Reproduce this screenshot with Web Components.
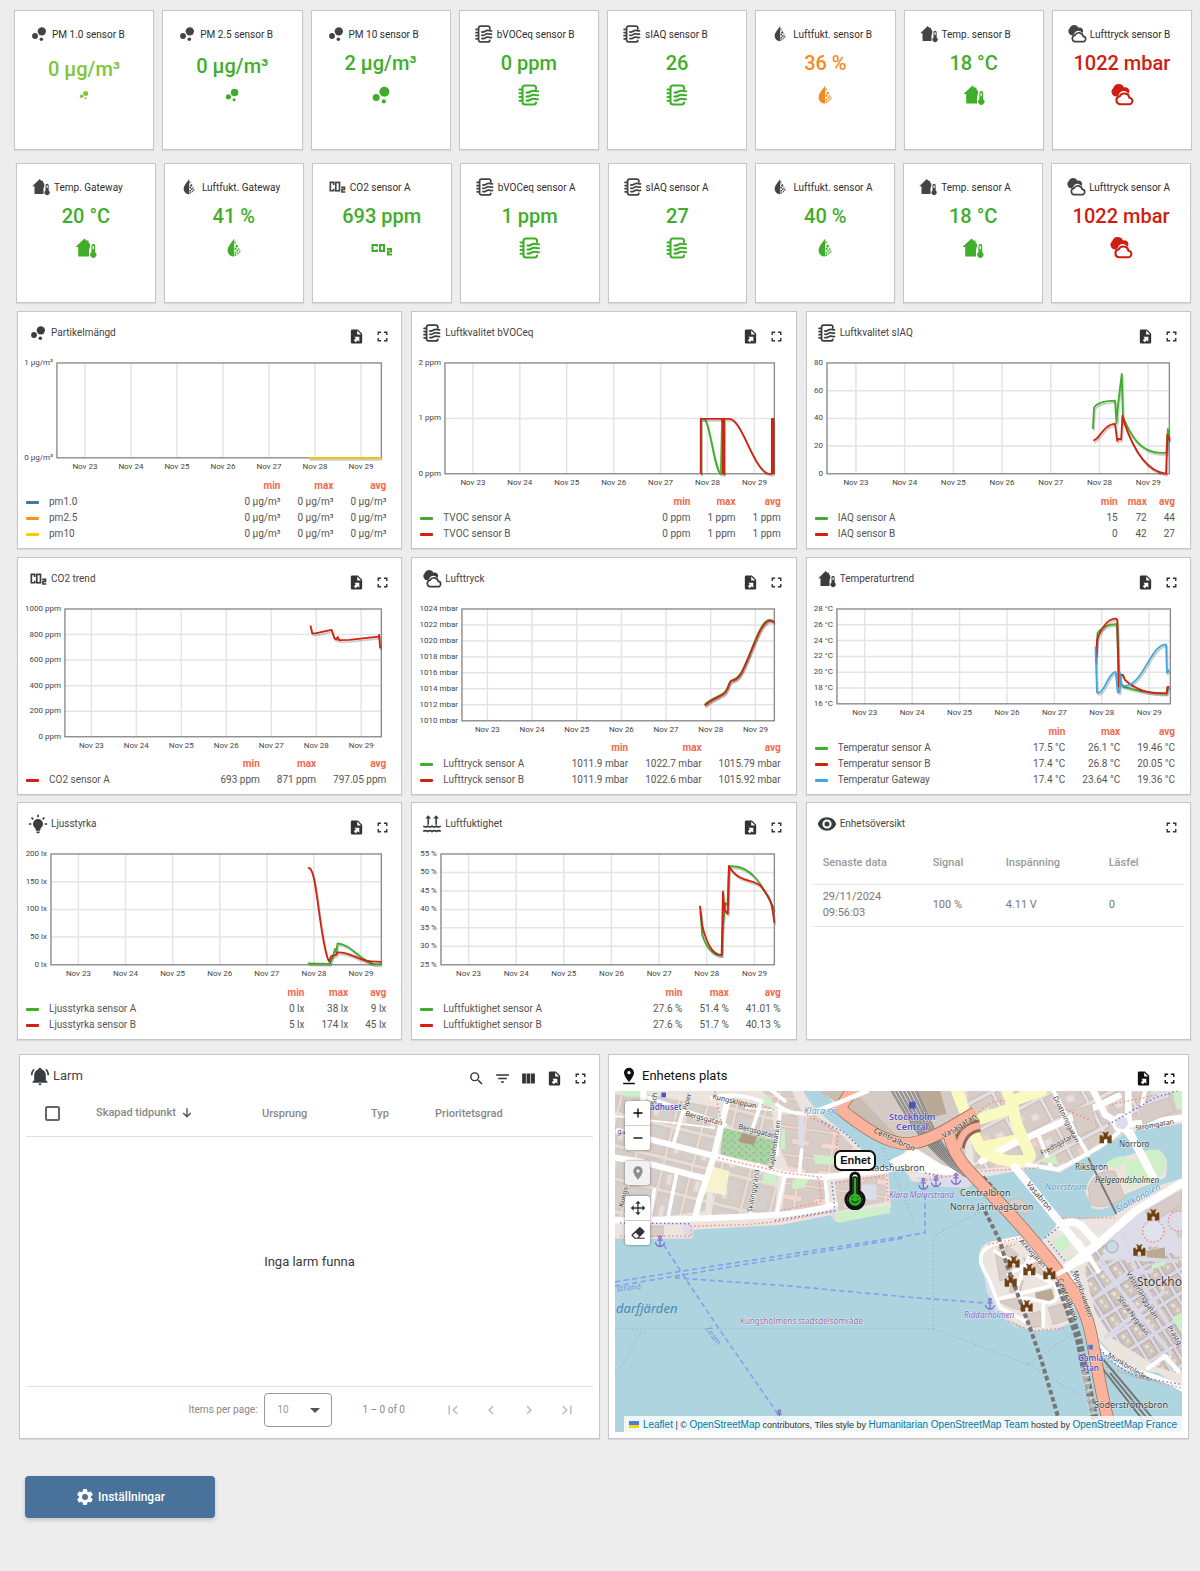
<!DOCTYPE html>
<html lang="sv">
<head>
<meta charset="utf-8">
<meta name="viewport" content="width=device-width, initial-scale=1">
<title>Sensorpanel</title>
<style>
  body { margin: 0; background: #ededed; color: #444; font-family: Roboto, "Liberation Sans", sans-serif; }
</style>
</head>
<body>
<sensor-dashboard></sensor-dashboard>
<script>
const ICONS = {
  bubbles: '<circle cx="7.2" cy="14.4" r="3.5"/><circle cx="14.8" cy="18.4" r="2.1"/><circle cx="15.4" cy="8.8" r="5"/>',
  air: '<g fill="none" stroke="currentColor" stroke-width="2.1" stroke-linecap="round" stroke-linejoin="round"><path d="M19 6V5q0-2.500-2.500-2.500H8Q5.500 2.500 5.500 5v14q0 2.500 2.500 2.500h8.500q2.500 0 2.500-2"/><path d="M2.500 6.500h2M2.500 10.200h2M2.500 14h2M2.500 17.700h2M9.500 9.500c3 1 4-2 7-1.800 2 .1 3 .8 4.500.5M9.500 13.500c3 1 4-2 7-1.800 2 .1 3 .8 4.500.5M9.500 17.500c3 1 4-2 7-1.800 2 .1 3 .8 4.500.5"/></g>',
  drop: '<g transform="translate(1.200 1.200) scale(.88)"><path d="M12.500 1.500C9 7 5 10.500 5 15a7 7 0 0 0 7.500 7z"/><path d="M13 3.500l1.600 2.500-1.600 2zM15.200 8l2 2.500-2 1.500-1.500-1.800zM13 12h2v2.200h-2zM17.500 11.500l1.500 2.700h-2.200zM15 14.300h2v2h-2zM18.500 15h1.300l-.5 2.400h-1.400zM13 16.500h2v2h-2zM16.300 17.500h2l-1.700 2.300h-1zM13 19.500h2.200l-1 2H13z"/></g>',
  home: '<path d="M10.500 2.500L1.500 11h2.700v9.500H15v-6.700l1-3.300V8l-1.500-1.500V4.500H13v.6z"/><path d="M19.300 8a1.900 1.900 0 0 0-1.900 1.900v6.300a3.100 3.100 0 1 0 3.800 0V9.900A1.900 1.900 0 0 0 19.300 8zm-.7 2h1.400v3.200h-1.400z"/>',
  clouds: '<g transform="translate(-1.200 -1) scale(1.080)"><path d="M7 13.500a4.500 4.500 0 0 1-2.800-8A5.300 5.300 0 0 1 14 5a3.900 3.900 0 0 1 5 4.600l-.6 1.200-1.600-1.400C13.500 7 9.600 9 9.200 12.200z"/><path d="M10.200 20.600h8.400a3 3 0 0 0 .5-6 4.800 4.800 0 0 0-9-1.300 3.700 3.700 0 0 0 .1 7.300z" fill="none" stroke="currentColor" stroke-width="1.900"/></g>',
  co2: '<g fill="none" stroke="currentColor" stroke-width="2"><polyline points="8,9.500 8,6.500 4,6.500 4,16.500 8,16.500 8,14"/><rect x="10.500" y="6.500" width="4.500" height="10"/><polyline points="17,12.500 21,12.500 21,15 18,15 18,18 22,18"/></g>',
  co2wide: '<g fill="none" stroke="currentColor" stroke-width="2"><polyline points="7,10.500 7,9 2.500,9 2.500,15 7,15 7,13.500"/><rect x="10" y="9" width="4" height="6"/><polyline points="17,13 21,13 21,15.500 18,15.500 18,18.500 22,18.500"/></g>',
  bulb: '<path d="M12 6a6 6 0 0 1 6 6c0 2.220-1.210 4.160-3 5.200V19a1 1 0 0 1-1 1h-4a1 1 0 0 1-1-1v-1.800c-1.790-1.040-3-2.980-3-5.200a6 6 0 0 1 6-6M14 21v1a1 1 0 0 1-1 1h-2a1 1 0 0 1-1-1v-1h4M20 11h3v2h-3v-2M1 11h3v2H1v-2M13 1v3h-2V1h2M4.920 3.500l2.130 2.140-1.420 1.410L3.500 4.930 4.920 3.500M16.950 5.630l2.120-2.130 1.430 1.430-2.130 2.120-1.420-1.420z"/>',
  humidity: '<path d="M7.500 1.500L11 5.500H8.500V13h-2V5.500H4zM17 1.500l3.500 4H18V13h-2V5.500h-2.500z"/><path d="M1.500 14.500c2 1.500 3.500 1.500 5.200 0 2 1.500 3.500 1.500 5.300 0 2 1.500 3.500 1.500 5.200 0 2 1.500 3.500 1.500 5.300 0M1.500 21c2-1.500 3.500-1.500 5.200 0 2-1.500 3.500-1.500 5.300 0 2-1.500 3.500-1.500 5.200 0 2-1.500 3.500-1.500 5.300 0" fill="none" stroke="currentColor" stroke-width="2"/>',
  eye: '<path d="M12 4C6.500 4 2.500 7.300 1 12c1.500 4.700 5.500 8 11 8s9.500-3.300 11-8c-1.500-4.700-5.500-8-11-8zm0 13.500a5.500 5.500 0 1 1 0-11 5.500 5.500 0 0 1 0 11zm0-8.500a3 3 0 1 0 0 6 3 3 0 0 0 0-6z"/>',
  bell: '<path d="M21 19v1H3v-1l2-2v-6c0-3.100 2.030-5.830 5-6.710V4a2 2 0 0 1 4 0v.29c2.970.88 5 3.610 5 6.710v6l2 2M14 21a2 2 0 0 1-4 0M19.750 3.190l-1.420 1.420A8.980 8.980 0 0 1 21 11h2c0-2.930-1.160-5.750-3.250-7.810M1 11h2c0-2.400.96-4.700 2.670-6.390L4.250 3.190A10.960 10.960 0 0 0 1 11z"/>',
  file: '<path fill-rule="evenodd" d="M14 2H6a2 2 0 0 0-2 2v16a2 2 0 0 0 2 2h12a2 2 0 0 0 2-2V8l-6-6M13 3.500L18.500 9H13V3.500M8.930 12.220H16v7.070l-2.120-2.120L11.050 20l-2.830-2.830 2.830-2.820-2.120-2.130z"/>',
  full: '<path d="M7 14H5v5h5v-2H7v-3zm-2-4h2V7h3V5H5v5zm12 7h-3v2h5v-5h-2v3zM14 5v2h3v3h2V5h-5z"/>',
  search: '<path d="M15.500 14h-.79l-.28-.27A6.470 6.470 0 0 0 16 9.500 6.500 6.500 0 1 0 9.500 16c1.610 0 3.090-.59 4.230-1.570l.27.28v.79l5 4.990L20.490 19l-4.990-5zm-6 0a4.500 4.500 0 1 1 0-9 4.500 4.500 0 0 1 0 9z"/>',
  filter: '<path d="M10 18h4v-2h-4v2zM3 6v2h18V6H3zm3 7h12v-2H6v2z"/>',
  columns: '<path d="M3 5h5.300v14H3zM9.300 5h5.300v14H9.300zM15.600 5H21v14h-5.400z"/>',
  down: '<path d="M10.800 4h2.400v11.600l4.600-4.600 1.600 1.700L12 20l-7.400-7.300L6.200 11l4.600 4.600z"/>',
  place: '<path d="M18 8A6 6 0 0 0 6 8c0 4.500 6 11 6 11s6-6.500 6-11zm-8 0a2 2 0 1 1 4 0 2 2 0 0 1-4 0zM5 20v2h14v-2H5z"/>',
  pin: '<path d="M12 2a7 7 0 0 0-7 7c0 5.250 7 13 7 13s7-7.750 7-13a7 7 0 0 0-7-7zm0 9.500a2.500 2.500 0 1 1 0-5 2.500 2.500 0 0 1 0 5z"/>',
  move: '<path d="M12 1l4 4.500h-3V11h5.500V8l4.500 4-4.500 4v-3H13v5.500h3L12 23l-4-4.500h3V13H5.500v3L1 12l4.500-4v3H11V5.500H8z"/>',
  eraser: '<path fill-rule="evenodd" d="M16.200 3.600l5 5a2 2 0 0 1 0 2.800L13.500 19H22v1.800H7L2.800 16.600a2 2 0 0 1 0-2.900L13.400 3.600a2 2 0 0 1 2.800 0zM4.200 15.200L8 19h3l2.500-2.500-5-5z"/>',
  plus: '<path d="M10.700 3h2.600v7.700H21v2.600h-7.700V21h-2.600v-7.700H3v-2.600h7.700z"/>',
  minus: '<path d="M3 10.700h18v2.600H3z"/>',
  first: '<path d="M18.410 16.590L13.820 12l4.590-4.590L17 6l-6 6 6 6zM6 6h2v12H6z"/>',
  prev: '<path d="M15.410 7.410L14 6l-6 6 6 6 1.410-1.410L10.830 12z"/>',
  next: '<path d="M10 6L8.590 7.410 13.170 12l-4.580 4.590L10 18l6-6z"/>',
  last: '<path d="M5.590 7.410L10.180 12l-4.590 4.590L7 18l6-6-6-6zM16 6h2v12h-2z"/>',
  gear: '<path d="M19.140 12.940c.04-.3.060-.61.060-.94s-.02-.64-.07-.94l2.030-1.580a.49.49 0 0 0 .12-.61l-1.920-3.320a.49.49 0 0 0-.59-.22l-2.390.96a7 7 0 0 0-1.620-.94l-.36-2.540a.48.48 0 0 0-.48-.41h-3.840a.48.48 0 0 0-.47.41l-.36 2.540c-.59.24-1.130.57-1.620.94l-2.390-.96a.48.48 0 0 0-.59.22L2.740 8.870a.48.48 0 0 0 .12.61l2.030 1.580a6 6 0 0 0-.02 1.880l-2.030 1.580a.49.49 0 0 0-.12.61l1.920 3.320c.12.22.37.29.59.22l2.390-.96c.5.38 1.030.7 1.620.94l.36 2.540c.05.24.24.41.48.41h3.840c.24 0 .44-.17.47-.41l.36-2.540c.59-.24 1.130-.56 1.620-.94l2.390.96c.22.08.47 0 .59-.22l1.920-3.320a.48.48 0 0 0-.12-.61zM12 15.600a3.600 3.600 0 1 1 0-7.200 3.600 3.600 0 0 1 0 7.200z"/>'
};

/* Inline icon on a 24-unit grid; --size sets its edge. */
class AppIcon extends HTMLElement {
  connectedCallback() {
    this.attachShadow({ mode: 'open' }).innerHTML =
      `<style>:host{display:inline-flex;flex:none;width:var(--size,20px);height:var(--size,20px)}svg{width:100%;height:100%;fill:currentColor}</style>
       <svg viewBox="0 0 24 24" aria-hidden="true">${ICONS[this.getAttribute('name')]}</svg>`;
  }
}
customElements.define('app-icon', AppIcon);

const CARD = `
  *{box-sizing:border-box}
  :host{display:flex;flex-direction:column;box-sizing:border-box;min-width:0;background:#fff;border:1px solid #c6c6c6;box-shadow:0 1px 1px rgba(0,0,0,.08)}
  header{display:flex;justify-content:space-between;align-items:flex-start;height:39px;padding:0 6px 0 10px}
  h2{display:flex;align-items:center;gap:3px;height:20px;margin:11px 0 0;font-size:10px;line-height:20px;font-weight:400;color:#444;white-space:nowrap}
  h2 app-icon{color:#3a3d3f}
  .actions{display:flex;margin-top:11px}
  .actions button{display:flex;align-items:center;justify-content:center;width:26px;height:26px;padding:0;border:0;background:none;color:#333;--size:17px}
`;
const action = (icon, label) => `<button type="button" aria-label="${label}"><app-icon name="${icon}"></app-icon></button>`;

class StatCard extends HTMLElement {
  connectedCallback() {
    const a = n => this.getAttribute(n);
    this.attachShadow({ mode: 'open' }).innerHTML = `<style>
      :host{display:block;box-sizing:border-box;flex:1 1 0;min-width:0;min-height:140px;padding-top:11px;background:#fff;border:1px solid #c6c6c6;box-shadow:0 1px 1px rgba(0,0,0,.08)}
      h2{display:flex;align-items:center;gap:3px;height:24px;margin:0;padding-left:14px;font-size:10px;font-weight:400;color:#2e2e2e;white-space:nowrap}
      div{display:flex;flex-direction:column;align-items:center;justify-content:center;gap:6px;height:64px;color:${a('tone')};--size:${a('size') || 24}px}
      strong{font-size:20px;line-height:28px;font-weight:500;white-space:nowrap}
      h2 app-icon{color:#444;--size:20px}
    </style>
    <h2><app-icon name="${a('icon')}"></app-icon><slot></slot></h2>
    <div><strong>${a('value')}</strong><app-icon name="${a('icon') === 'co2' ? 'co2wide' : a('icon')}"></app-icon></div>`;
  }
}
customElements.define('stat-card', StatCard);

const G = '#3fae2a', R = '#d3200f', B = '#42a5dc';
/* box: left, right, top, bottom of the plot on the drawing canvas; x: first tick and pitch. */
const TRENDS = {
  pm: { view: [18, 351, 384, 124], box: [57, 382, 363, 458], x: [85, 46.1], y: ['1 µg/m³', '0 µg/m³'],
    lines: [['#f2c200', 'M309 458H382']],
    legend: [['#3f76ad', 'pm1.0', '0 µg/m³', '0 µg/m³', '0 µg/m³'], ['#f7931e', 'pm2.5', '0 µg/m³', '0 µg/m³', '0 µg/m³'], ['#f7cd00', 'pm10', '0 µg/m³', '0 µg/m³', '0 µg/m³']] },
  voc: { view: [413, 351, 384, 138], box: [446, 776, 363, 474], x: [474, 47], y: ['2 ppm', '1 ppm', '0 ppm'],
    lines: [[G, 'M702.300 474V419H705.500C711 419 716 472 722.500 474L723.500 419H725.500V474'], [R, 'M702.300 474V419H724.500V474H725.500V419H731C744 419 756 474 771.500 474H773.500V419H775V474']],
    legend: [[G, 'TVOC sensor A', '0 ppm', '1 ppm', '1 ppm'], [R, 'TVOC sensor B', '0 ppm', '1 ppm', '1 ppm']] },
  iaq: { view: [807, 351, 384, 138], box: [827, 1170, 363, 474], x: [856, 48.8], y: ['80', '60', '40', '20', '0'],
    lines: [[G, 'M1093.400 429L1094.500 408C1097 403 1105 401 1115.500 400.700L1117 423L1118.500 405L1122.300 374L1123.500 417C1132 438 1142 452 1160 453H1167L1168.500 429L1170 440'],
            [R, 'M1094 441L1097 439C1103 432 1108 424 1115.600 424L1117.700 441L1119 439L1121.700 439.500L1123 415.700L1124.500 422C1134 450 1148 472 1166.700 474L1168 435L1170 440']],
    legend: [[G, 'IAQ sensor A', '15', '72', '44'], [R, 'IAQ sensor B', '0', '42', '27']] },
  co2: { view: [18, 597, 384, 155], box: [65, 382, 609, 737], x: [91.5, 45.05], y: ['1000 ppm', '800 ppm', '600 ppm', '400 ppm', '200 ppm', '0 ppm'],
    lines: [[R, 'M311 625.500L312.700 633.500H316L325 631.500L332.200 630L335 638.500L337 639.500L338.300 637L339.500 640.300L350 640L377 637H379.200L379.700 635L380.800 648.500']],
    legend: [[R, 'CO2 sensor A', '693 ppm', '871 ppm', '797.05 ppm']] },
  pressure: { view: [413, 597, 384, 138], box: [463, 776, 609, 721], x: [488.5, 44.75], y: ['1024 mbar', '1022 mbar', '1020 mbar', '1018 mbar', '1016 mbar', '1014 mbar', '1012 mbar', '1010 mbar'],
    lines: [[G, 'M706 705C712 699 720 697 725 693.500C730 690 730 682 733 680.500C737 680 739 678 742 674C752 658 761 620 771 620L775 621'], [R, 'M706.400 705.700C712 700 720 698 725 694.500C730 691 730 683 733 681C737 680.500 739 679 742 675C752 659 761 621 772 620.700C774 620.700 775 621 775.500 622.500']],
    legend: [[G, 'Lufttryck sensor A', '1011.9 mbar', '1022.7 mbar', '1015.79 mbar'], [R, 'Lufttryck sensor B', '1011.9 mbar', '1022.6 mbar', '1015.92 mbar']] },
  temp: { view: [807, 597, 384, 122], box: [837, 1171, 609, 704], x: [864.8, 47.5], y: ['28 °C', '26 °C', '24 °C', '22 °C', '20 °C', '18 °C', '16 °C'],
    lines: [[G, 'M1096.700 656L1098 633C1102 627 1110 624 1117.400 624.300L1119.500 682L1124.500 686.700C1138 692 1152 693 1167 693.300L1169 687'],
            [R, 'M1096.400 663L1097.500 640C1101 630 1108 618 1116.600 618.700L1117.800 620L1119.300 686.700L1121 675L1123.500 675L1125.500 680C1137 690 1148 694 1167.200 693.700L1168 687.300L1170 686.700'],
            [B, 'M1096 646.700L1097.500 692.700H1100C1106 690 1109 673 1116.300 672L1118.200 692.300H1120L1120.900 673.300L1121.600 685L1125 686C1143 686 1150 648 1165 644.700H1166.800L1167.500 672.700L1170 670']],
    legend: [[G, 'Temperatur sensor A', '17.5 °C', '26.1 °C', '19.46 °C'], [R, 'Temperatur sensor B', '17.4 °C', '26.8 °C', '20.05 °C'], [B, 'Temperatur Gateway', '17.4 °C', '23.64 °C', '19.36 °C']] },
  light: { view: [18, 842, 384, 138], box: [51, 382, 854, 965], x: [78.5, 47.2], y: ['200 lx', '150 lx', '100 lx', '50 lx', '0 lx'],
    lines: [[G, 'M308.500 963.700L330.300 964L333 958L335.600 949L336.800 953L338 943.700C352 944 360 961 375 964.500H382'],
            [R, 'M308.500 868.300C317 863 319 930 328 958L329.500 961.300L331.800 956.300L336.800 955L338 952.500C352 952 358 961 372 961.500L382 962']],
    legend: [[G, 'Ljusstyrka sensor A', '0 lx', '38 lx', '9 lx'], [R, 'Ljusstyrka sensor B', '5 lx', '174 lx', '45 lx']] },
  humid: { view: [413, 842, 384, 138], box: [442, 776, 854, 965], x: [469.6, 47.75], y: ['55 %', '50 %', '45 %', '40 %', '35 %', '30 %', '25 %'],
    lines: [[G, 'M702 912L703.700 935C707 946 714 956 723.200 955.500L724.500 925L726.700 903.300L729 905L730.500 866.500C752 864 764 884 776 910'],
            [R, 'M701.400 906L703.500 925C708 944 714 955 723.200 955.300L724.500 891.500L726 910L729.400 914L730.500 866C741 885 758 878 764 888C768 894 772 897 774.200 910L776 922.700']],
    legend: [[G, 'Luftfuktighet sensor A', '27.6 %', '51.4 %', '41.01 %'], [R, 'Luftfuktighet sensor B', '27.6 %', '51.7 %', '40.13 %']] }
};

class TrendCard extends HTMLElement {
  connectedCallback() {
    const t = TRENDS[this.getAttribute('data')], [l, r, top, bot] = t.box, n = t.y.length - 1;
    let grid = '', labels = '';
    for (let i = 0; i < 7; i++) {
      const x = t.x[0] + i * t.x[1];
      grid += `M${x} ${top}V${bot}`;
      labels += `<text x="${x}" y="${bot + 11}" text-anchor="middle">Nov ${23 + i}</text>`;
    }
    t.y.forEach((s, i) => {
      const y = top + (bot - top) * i / n;
      if (i && i < n) grid += `M${l} ${y}H${r}`;
      labels += `<text x="${l - 4}" y="${y + 2}" text-anchor="end">${s}</text>`;
    });
    const lines = t.lines.map(([c, d]) => `<path d="${d}" class="shade"/><path d="${d}" stroke="${c}"/>`).join('');
    this.attachShadow({ mode: 'open' }).innerHTML = `<style>${CARD}
      :host{min-height:238px}
      .plot{display:block;width:100%;font-size:8px;fill:#444}
      .plot path{fill:none;stroke-width:1.800;stroke-linejoin:round}
      .plot .grid{stroke:#e4e4e4;stroke-width:1.500}
      .plot .shade{stroke:#000;opacity:.2;transform:translate(1px,2px)}
      .plot rect{fill:none;stroke:#8c8c8c;stroke-width:1.400}
      table{width:auto;margin:auto 15px 6px 8px;border-collapse:collapse;font-size:10px;line-height:16px;color:#555;white-space:nowrap}
      th,td{padding:0 0 0 17px;text-align:right;font-weight:400}
      thead th{padding-left:10px;color:#f4694b;font-weight:700}
      tbody th{width:100%;padding:0;text-align:left}
      thead td{padding:0}
      i{display:inline-block;width:13px;height:3px;margin-right:10px;vertical-align:middle;border-radius:1px}
    </style>
    <header><h2><app-icon name="${this.getAttribute('icon')}"></app-icon><slot></slot></h2>
      <div class="actions">${action('file', 'Exportera')}${action('full', 'Helskärm')}</div></header>
    <svg class="plot" viewBox="${t.view.join(' ')}"><path class="grid" d="${grid}"/><rect x="${l}" y="${top}" width="${r - l}" height="${bot - top}"/>${lines}${labels}</svg>
    <table><thead><tr><td></td><th scope="col">min</th><th scope="col">max</th><th scope="col">avg</th></tr></thead>
    <tbody>${t.legend.map(([c, name, ...v]) => `<tr><th scope="row"><i style="background:${c}"></i>${name}</th>${v.map(x => `<td>${x}</td>`).join('')}</tr>`).join('')}</tbody></table>`;
  }
}
customElements.define('trend-card', TrendCard);

class DeviceCard extends HTMLElement {
  connectedCallback() {
    this.attachShadow({ mode: 'open' }).innerHTML = `<style>${CARD}
      table{margin:0 6px;border-collapse:collapse;table-layout:fixed;font-size:11px;line-height:16px;color:#777}
      th,td{padding:0 0 0 10px;border-bottom:1px solid #e4e4e4;text-align:left}
      th{height:42px;font-weight:500;color:#999}
      td{height:42px}
    </style>
    <header><h2><app-icon name="eye"></app-icon><slot></slot></h2><div class="actions">${action('full', 'Helskärm')}</div></header>
    <table><colgroup><col style="width:110px"><col style="width:73px"><col style="width:103px"><col></colgroup>
      <thead><tr><th>Senaste data</th><th>Signal</th><th>Inspänning</th><th>Läsfel</th></tr></thead>
      <tbody><tr><td>29/11/2024<br>09:56:03</td><td>100 %</td><td>4.11 V</td><td>0</td></tr></tbody></table>`;
  }
}
customElements.define('device-card', DeviceCard);

class AlarmCard extends HTMLElement {
  connectedCallback() {
    this.attachShadow({ mode: 'open' }).innerHTML = `<style>${CARD}
      header{height:36px}
      h2{font-size:13px}
      .actions{margin-top:10px}
      table{margin:0 6px;border-collapse:collapse;table-layout:fixed;font-size:11px;color:#888}
      th{height:45px;padding:0;border-bottom:1px solid #e0e0e0;text-align:left;font-weight:500}
      th app-icon{--size:14px;margin-left:4px;vertical-align:middle;color:#555}
      input{appearance:none;display:block;width:15px;height:15px;margin:0 0 0 19px;border:2px solid #666;border-radius:2px;background:#fff}
      p{flex:1;display:flex;align-items:center;justify-content:center;margin:0 6px;font-size:13px;color:#3a3a3a}
      footer{display:flex;align-items:center;justify-content:flex-end;height:52px;margin:0 6px;padding:0 7px 6px 0;border-top:1px solid #e0e0e0;font-size:10px;color:#888}
      .pick{position:relative;margin:0 30px 0 7px}
      select{appearance:none;display:block;width:68px;height:34px;padding:0 12px;border:1px solid #999;border-radius:4px;background:#fff;color:#999;font:10px/32px Roboto,sans-serif}
      .pick::after{content:"";position:absolute;right:12px;top:15px;border:5px solid transparent;border-top-color:#555;border-bottom:0;pointer-events:none}
      .range{margin-right:29px}
      footer button{display:flex;align-items:center;justify-content:center;width:38px;height:38px;padding:0;border:0;background:none;color:#bdbdbd;--size:18px}
    </style>
    <header><h2><app-icon name="bell"></app-icon><slot></slot></h2>
      <div class="actions">${action('search', 'Sök')}${action('filter', 'Filter')}${action('columns', 'Kolumner')}${action('file', 'Exportera')}${action('full', 'Helskärm')}</div></header>
    <table><colgroup><col style="width:70px"><col style="width:166px"><col style="width:109px"><col style="width:64px"><col></colgroup>
      <thead><tr><th><input type="checkbox" aria-label="Markera alla"></th><th>Skapad tidpunkt<app-icon name="down"></app-icon></th><th>Ursprung</th><th>Typ</th><th>Prioritetsgrad</th></tr></thead></table>
    <p>Inga larm funna</p>
    <footer><label for="size">Items per page:</label><span class="pick"><select id="size"><option>10</option></select></span><span class="range">1 – 0 of 0</span>
      ${action('first', 'Första')}${action('prev', 'Föregående')}${action('next', 'Nästa')}${action('last', 'Sista')}</footer>`;
  }
}
customElements.define('alarm-card', AlarmCard);

/* Street labels: text, x, y, size, rotation, class */
const PLACES = [
  ['ådhuset', 650, 1110, 8, 0, 'st'], ['Kungsklippan', 712, 1099, 7, 13], ['Bergsgatan', 685, 1116, 7, 15], ['Bergsgatan', 738, 1129, 7, 15],
  ['Kaplansbacken', 773, 1170, 7, -81], ['Skillinggränd', 752, 1213, 7, -80], ['Kungs', 623, 1208, 7, -75], ['Sch', 656, 1105, 7, -85], ['Piper', 687, 1111, 7, -75], ['gatan', 617, 1134, 7, 10],
  ['Klara sjö', 804, 1114, 9, 0, 'wa'], ['Stockholm', 889, 1120, 9, 0, 'st'], ['Central', 896, 1130, 9, 0, 'st'],
  ['Centralbron', 873, 1133, 8, 25], ['Vasagatan', 944, 1139, 8, -32], ['Stadshusbron', 866, 1171, 9, 0], ['Klara Mälarstrand', 889, 1198, 8, 0, 'fe'],
  ['Centralbron', 960, 1196, 9, 0], ['Norra Järnvägsbron', 950, 1210, 9, 0], ['Vasabron', 1026, 1185, 8, 50], ['Norrström', 1045, 1190, 9, 0, 'wa'],
  ['Riksbron', 1075, 1170, 8, 0], ['Helgeandsholmen', 1095, 1183, 8, 0, 'it'], ['Norrbro', 1119, 1147, 8, 0], ['Strömgatan', 1136, 1131, 7, -10],
  ['Fredsgatan', 1042, 1156, 7, -29], ['Drottninggatan', 1053, 1098, 7, 64], ['Stallkanalen', 1118, 1213, 9, -29, 'wa'],
  ['Munkbroleden', 1073, 1272, 7, 72], ['Munkbroleden', 1107, 1357, 7, 31], ['Västerlånggatan', 1126, 1274, 7, 58], ['Stora Nygatan', 1117, 1299, 7, 52], ['Prästg', 1167, 1328, 7, 58],
  ['Stockho', 1137, 1286, 12, 0], ['Riddarholmen', 964, 1318, 8, 0, 'fe'], ['Arkivgatan', 1019, 1242, 7, 48], ['Centralbron', 1057, 1280, 8, 68],
  ['Gamla', 1078, 1361, 8, 0, 'st'], ['stan', 1082, 1371, 8, 0, 'st'], ['Söderströmsbron', 1094, 1408, 9, 0], ['Västra stam', 1081, 1372, 8, 78, 'gr'],
  ['Kungsholmens stadsdelsområde', 740, 1324, 8, 0, 'ad'], ['darfjärden', 616, 1313, 13, 0, 'big'], ['strand', 617, 1292, 8, -6, 'fl'], ['Zeam', 705, 1329, 8, 55, 'fl']
];
const CASTLES = [[1502, 280], [1645, 512], [1603, 618], [1226, 653], [1273, 676], [1333, 688], [1217, 711], [1265, 785]];
const ANCHORS = [[955, 418], [993, 410], [1053, 403], [1155, 778], [165, 590], [523, 1112]];

class CityMap extends HTMLElement {
  connectedCallback() {
    const rails = [0, 12, 24, 36, 48, 60, 72].map(d => `M${860 + d} 138C${900 + d} 210 ${960 + d / 2} 320 ${1080 + d / 3} 395`).join('');
    this.attachShadow({ mode: 'open' }).innerHTML = `<style>
      :host{display:block;position:relative;overflow:hidden;background:#aed5df}
      svg.tiles{position:absolute;inset:0;width:100%;height:100%}
      .land{fill:#ebe4df}.road{fill:none;stroke:#fff;stroke-linejoin:round;stroke-linecap:round}
      .foot{fill:none;stroke:#f58d7e;stroke-width:4;stroke-dasharray:5 7}.cycle{fill:none;stroke:#5a66e0;stroke-width:4;stroke-dasharray:4 8}
      .ferry{fill:none;stroke:#8ba0ea;stroke-width:5;stroke-dasharray:16 10}.border{fill:none;stroke:#9aa8bb;stroke-width:3;stroke-dasharray:4 8}
      .moto{fill:none;stroke:#8f6a5c}.moto+.moto{stroke:#fcb29a}.yel{fill:none;stroke:#f9fac0;stroke-width:34;stroke-linejoin:round;stroke-linecap:round}
      .park{fill:#cdf0c9}.bld{fill:#d8cdc6;stroke:#c5b5aa;stroke-width:2}.plaza{fill:#dddde9}.rail{fill:none;stroke:#777;stroke-width:6}
      text{font-family:"Noto Sans","Open Sans",sans-serif;fill:#3c3c3c;stroke:#fff;stroke-opacity:.6;stroke-width:1px;paint-order:stroke}
      .st{fill:#5151c8;font-weight:600}.wa{fill:#6099c8;font-style:italic}.fe{fill:#7f66c4;font-style:italic}.it{font-style:italic}
      .gr{fill:#999}.ad{fill:#9673a8}.big{fill:#4d86b5;font-style:italic;stroke:none}.fl{fill:#8291df;stroke:none}
    </style>
    <svg class="tiles" viewBox="615 1091 567 342" preserveAspectRatio="xMidYMid slice" role="img" aria-label="Karta över Stockholm">
      <defs>
        <pattern id="blocks" width="86" height="96" patternUnits="userSpaceOnUse" patternTransform="rotate(14)">
          <rect width="86" height="96" fill="#e6ddd7"/><rect x="5" y="6" width="75" height="82" fill="#d8cdc6" stroke="#c7b8ae" stroke-width="2"/><rect x="20" y="18" width="46" height="14" fill="#d0d2d2"/><rect x="20" y="44" width="14" height="30" fill="#e6e0dc"/><rect x="50" y="44" width="14" height="30" fill="#d0d2d2"/>
        </pattern>
        <pattern id="pink" width="90" height="84" patternUnits="userSpaceOnUse" patternTransform="rotate(8)">
          <rect width="90" height="84" fill="#f2d8d1"/><path d="M4 4h80v28H54v18h30v30H4V50h16V32H4z" fill="#d8cdc6" stroke="#c7b8ae" stroke-width="2"/>
        </pattern>
        <pattern id="city" width="120" height="84" patternUnits="userSpaceOnUse" patternTransform="rotate(-28)">
          <rect width="120" height="84" fill="#e4e0e4"/><rect x="5" y="5" width="108" height="70" fill="#d8cdc6" stroke="#b9a99e" stroke-width="2"/><rect x="24" y="20" width="22" height="18" fill="#f0d0c8"/><rect x="66" y="34" width="22" height="18" fill="#e8e0dc"/>
        </pattern>
        <pattern id="old" width="44" height="62" patternUnits="userSpaceOnUse" patternTransform="rotate(-32)">
          <rect width="44" height="62" fill="#d9d9e8"/><rect x="4" y="4" width="33" height="49" fill="#d0c3ba" stroke="#a99c94" stroke-width="2"/><rect x="14" y="13" width="9" height="10" fill="#eee6e0"/><rect x="18" y="31" width="9" height="10" fill="#e4dcd6"/>
        </pattern>
        <pattern id="trees" width="22" height="20" patternUnits="userSpaceOnUse"><rect width="22" height="20" fill="#acd2a6"/><circle cx="6" cy="6" r="4" fill="#8dbf89"/><circle cx="16" cy="14" r="4" fill="#93c68e"/></pattern>
        <g id="castle"><path d="M-18-8h7v4h5v-10h-3v-4h6v3h6v-3h6v4H6v10h5v-4h7v24H5V6q-5-6-10 0v10h-13z" fill="#6e4114"/></g>
        <g id="anchor" fill="none" stroke="#7c72cc" stroke-width="4"><circle cy="-12" r="4"/><path d="M0-8V15M-8-3H8M-14 4Q-10 16 0 16T14 4"/></g>
      </defs>
      <g transform="translate(605 1045) scale(.33333)">
        <rect x="0" y="100" width="1800" height="1100" fill="#aed5df"/>
        <path class="land" d="M0 100H580C600 170 640 205 700 250S770 310 800 375L850 385 858 490 700 535 675 512 530 541 265 556 262 582H0z"/>
        <path fill="url(#blocks)" d="M130 150L340 190 335 320 320 340 300 500 150 520 30 515V150z"/>
        <path fill="url(#blocks)" d="M330 350L520 390 510 500 320 515zM370 160L500 190 515 330 350 230z"/>
        <path fill="url(#pink)" d="M530 210L620 205 700 260 785 350 700 385 560 390 520 300zM545 400L660 405 660 480 530 505z"/>
        <path fill="url(#pink)" d="M470 138H560L590 200 530 200zM690 410L840 390 850 470 700 500z"/>
        <path fill="url(#trees)" d="M355 250L515 290 490 362 345 330z"/><path fill="#ae9a83" d="M410 265l45 12-8 25-45-10z"/>
        <path class="park" d="M625 330l55 5 50 30-100-8zM475 385h40v32h-42zM565 405l45-3-10 28-40 4zM695 505L853 483 856 505 702 535zM40 138h90v18H60zM290 405h15v45h-18zM530 255h10v60h-15zM475 158l25 0 5 28-30-4z"/>
        <path fill="#f7f3cf" d="M322 366l52 14-14 72-60-12z"/><path class="plaza" d="M580 215h18v90h-18zM770 420h45v45h-45zM236 540h26v42h-26zM672 500h20v35z"/>
        <path class="bld" d="M90 544h85v32H90z"/>
        <path class="road" stroke-width="18" d="M30 528L270 523 420 516Q600 510 690 480M30 340L110 352 300 402M40 260L330 335 540 390 660 398 850 375 940 350M115 300V138M370 160L325 340 285 460 270 520"/>
        <path class="road" stroke-width="11" d="M215 385L190 515M148 435L135 520M240 180L205 300M320 160Q380 140 470 170L440 260M460 360L435 510M540 390L515 505M525 195L515 330M590 315L583 385M515 180Q560 215 620 205L700 175 830 138M540 170L500 138M660 400L670 490M130 160L360 240"/>
        <path fill="none" stroke="#fff" stroke-width="5" d="M30 215L330 250M420 190L540 200"/>
        <path class="foot" d="M45 575H258V545L430 540 530 530 690 500M340 340L540 385 650 398M350 240L330 140M470 180L515 200M690 415L845 392 850 470M605 210L700 265 690 350"/>
        <path class="foot" d="M640 400L650 470 520 500M740 190L640 138"/>
        <path class="cycle" d="M45 535L260 538M510 528L690 498 680 410M650 230L720 265 765 310"/>

        <path class="land" d="M640 100L690 185 900 318 885 350 920 410 1085 425 1150 395 1285 370 1365 385 1480 315 1565 265 1800 225V100z"/>
        <path fill="url(#city)" d="M1080 100H1730V225L1560 265 1365 380 1285 360 1110 375z"/>
        <path fill="#c9bdb2" d="M650 138L720 138 840 190 920 270 905 300 780 250z"/><path fill="#d5cbc4" d="M745 138H1070L1085 395 930 330z"/>
        <path fill="#b9aa97" d="M930 138h75l20 70-60 15z"/>
        <path fill="#fff" d="M850 350L930 310 1010 360 1110 400 960 385 890 372z"/>
        <path class="plaza" d="M930 400L1130 385 1090 430 960 425zM1640 138h50v50h-60z"/>
        <path class="rail" d="${rails}"/><path fill="none" stroke="#bbb" stroke-width="2" d="${rails}"/>
        <path class="yel" d="M1055 138L1090 230 1125 310Q1170 350 1230 350T1270 320L1235 240 1220 180 1205 138M1090 235L1225 190M1125 310L1240 285M1220 170L1310 138"/>
        <path class="road" stroke-width="20" d="M1130 350L1230 295 1400 220 1540 155M1465 138L1500 210 1555 245 1600 310 1645 400M1570 138V240L1730 220"/>
        <path class="yel" d="M1125 310Q1170 350 1230 350T1270 320L1235 240 1220 180"/>
        <path class="road" stroke-width="12" d="M1345 138L1420 280 1450 330M1265 360L1360 375 1480 310 1540 265M1300 270L1340 370M1620 138L1610 190"/>
        <circle cx="1550" cy="235" r="24" fill="#dddde9" stroke="#fff" stroke-width="10"/>
        <path class="park" d="M1700 138h50v70l-35-15zM1300 350l50-20 10 30z"/>
        <path class="bld" d="M1600 190l90-30 20 40-95 40zM1400 200l60-20 15 70-55 25z"/>
        <path class="foot" d="M950 410L1120 380 1300 370M1100 230Q1150 160 1200 170M1370 190L1460 230M1520 180L1660 150"/>
        <path class="cycle" d="M960 385L1010 395M1510 240L1650 160 1720 138"/>

        <path class="land" d="M1440 440Q1460 370 1530 345T1660 315Q1700 340 1680 400L1560 450Q1500 510 1460 490z"/>
        <path fill="#d8cdc6" stroke="#c5b5aa" stroke-width="2" d="M1450 430Q1470 370 1530 380L1560 460Q1500 500 1455 480z"/>
        <path class="park" d="M1495 365Q1530 325 1570 340L1540 370zM1560 350L1600 340 1640 410 1570 425zM1620 320Q1680 300 1685 370L1660 400z"/>
        <path class="rail" stroke-width="14" d="M1450 340L1540 520"/><path class="road" stroke-width="24" d="M1575 265L1645 400"/>

        <path class="land" d="M1310 590L1365 530 1525 515 1640 430 1800 380V1030L1730 1030 1660 985 1560 975 1500 905 1460 860 1430 760 1390 690z"/>
        <path fill="url(#old)" d="M1460 600L1560 540 1730 430V990L1660 970 1520 880 1470 800 1440 680z"/>
        <path class="plaza" d="M1560 530L1730 430V640L1640 600 1590 640 1480 650z"/><path class="bld" d="M1620 500l110-60v40l-90 55zM1700 500l40-20v90l-20 10z"/>
        <circle cx="1645" cy="560" r="32" fill="#dfe3ee" stroke="#f58d7e" stroke-width="4" stroke-dasharray="5 6"/><circle cx="1522" cy="607" r="18" fill="#c8d9e8" stroke="#aaa" stroke-width="3"/>
        <circle cx="1720" cy="530" r="30" fill="#dddde9" stroke="#f58d7e" stroke-width="4" stroke-dasharray="5 6"/>
        <path fill="#b9a995" d="M1625 620l55-12v38l-48 12z"/><path class="park" d="M1340 590l45-25 8 45-30 15zM1375 640l40-10-15 30zM1640 660l40-10v12l-40 12zM1700 820l30-15v60z"/>
        <path class="road" stroke-width="24" d="M1230 368L1370 540 1450 640M1365 545Q1400 520 1430 545L1480 600 1360 690 1500 580 1590 500 1740 410"/>
        <path class="road" stroke-width="14" d="M1450 820L1465 880Q1520 960 1610 985T1740 1040M1420 590L1480 680M1400 700L1460 830M1630 970L1680 935 1720 980"/>
        <path fill="none" stroke="#d9d9e8" stroke-width="12" d="M1550 560L1600 700 1730 900M1480 650L1620 830 1700 930M1470 760L1560 690 1640 680M1500 880L1680 740M1540 640L1720 650"/>
        <path class="cycle" d="M1320 580L1365 545M1400 680L1440 790M1465 885Q1520 970 1610 1000L1730 1020M1330 590L1380 650"/>
        <path class="foot" d="M1370 520L1530 520M1480 960L1600 1000 1730 1030M1700 900L1720 940"/>

        <path class="land" d="M1125 620Q1130 595 1170 588L1245 575 1290 600 1340 680 1400 740 1415 830 1350 855 1275 860 1180 810 1150 750z"/>
        <path class="plaza" d="M1125 620L1165 750 1240 855 1170 800 1145 740z"/>
        <path class="bld" d="M1170 620l40-15 30 25-30 70-25 10zM1255 640l40 15 30 40-50-10zM1180 770l70-10 10 40-40-10zM1265 810l40-10 5 45-35 5zM1330 790l50-15 10 50-45 15zM1215 700l40 10-10 30-30 5z"/><path fill="#b9a995" d="M1290 745l50-12 10 35-55 5z"/>
        <path class="road" stroke-width="11" d="M1260 578Q1170 590 1140 615T1150 700L1185 790 1270 835M1175 765L1350 720 1270 680 1170 620M1350 720Q1370 770 1330 775L1260 760M1270 640L1235 730 1260 780M1315 780V845M1210 690L1300 640"/>
        <path class="foot" d="M1150 600L1250 580M1180 610L1230 600M1210 830L1280 860 1380 850M1210 700L1250 740"/>

        <path fill="none" stroke="#777" stroke-width="12" stroke-dasharray="14 8" d="M1140 500L1185 590 1205 660 1275 850 1310 950 1360 1120"/>
        <path fill="none" stroke="#777" stroke-width="22" stroke-dasharray="16 7" d="M1130 400L1250 540M1360 710L1420 880 1475 1150"/>
        <path class="rail" stroke-width="10" d="M1475 950L1640 1160M1495 945L1650 1130M1515 985L1625 1120"/>
        <path class="bld" d="M1210 470q20-15 45 0l20 20-10 20-50-15z"/>
        <path class="moto" stroke-width="38" d="M740 138L700 200M690 180C760 240 850 305 915 297S1040 245 1110 205M1030 255C1040 330 1080 370 1150 440S1300 600 1390 720 1450 900 1515 1150M1060 310Q1070 250 1125 243"/>
        <path class="moto" stroke-width="34" d="M740 138L700 200M690 180C760 240 850 305 915 297S1040 245 1110 205M1030 255C1040 330 1080 370 1150 440S1300 600 1390 720 1450 900 1515 1150"/>
        <path fill="none" stroke="#fcb29a" stroke-width="20" d="M1060 310Q1070 250 1125 243"/>
        <path fill="none" stroke="#fff" stroke-width="14" d="M620 205L700 175 790 138M1355 690L1450 640"/>

        <path class="ferry" d="M30 712L230 680 900 575 960 565V450M30 725L240 690 900 580M210 700L560 725 900 757 1135 775M175 600L240 700 340 850 520 1110"/>
        <path class="border" d="M35 853H985V575L1130 500M985 853L1270 960M1270 960L1400 870M1270 960L1420 1050M40 980L110 860M835 310L885 430 930 540"/>
        <path fill="#ddd5d0" d="M620 1118h70v14h-70zM760 1122h120v14H760zM990 1115h165v14H990z"/>
        ${ANCHORS.map(([x, y]) => `<use href="#anchor" x="${x}" y="${y}"/>`).join('')}
        ${CASTLES.map(([x, y]) => `<use href="#castle" x="${x}" y="${y}"/>`).join('')}
        <path fill="#5151c8" d="M912 172h20v20h-20zM169 144h14v14h-14z"/><path fill="#4d7fd0" d="M1450 901h14v14h-14z"/>
      </g>
      ${PLACES.map(([t, x, y, s, r, c]) => `<text class="${c || ''}" font-size="${s}" transform="translate(${x} ${y}) rotate(${r})">${t}</text>`).join('')}
    </svg>`;
  }
}
customElements.define('city-map', CityMap);

class MapCard extends HTMLElement {
  connectedCallback() {
    this.attachShadow({ mode: 'open' }).innerHTML = `<style>${CARD}
      header{height:36px}
      h2{font-size:13px;color:#111}
      h2 app-icon,.actions button{color:#111}
      .actions{margin-top:10px}
      .map{position:relative;flex:1;min-height:341px;margin:0 6px 6px}
      city-map{position:absolute;inset:0}
      .tools{position:absolute;left:10px;top:10px;display:flex;flex-direction:column;gap:11px}
      .group{width:25px;border-radius:3px;background:#fff;box-shadow:0 0 3px rgba(0,0,0,.5)}
      .group button{display:flex;align-items:center;justify-content:center;width:25px;height:24px;padding:0;border:0;background:none;color:#333;--size:16px}
      .group button+button{border-top:1px solid #ccc;height:25px}
      .zoom button{--size:12px;color:#000}
      .off{background:#f1f1f1}.off button{color:#8d8d8d}
      .marker{position:absolute;left:42.400%;top:59px;display:flex;flex-direction:column;align-items:center;width:42px;margin-left:-21px}
      .marker span{box-sizing:border-box;width:42px;height:21px;border:2px solid #111;border-radius:7px;background:#fff;color:#111;font:700 11px/17px "Liberation Sans",Arial,sans-serif;text-align:center}
      .marker svg{width:22px;height:40px}
      .credit{position:absolute;right:0;bottom:0;padding:2px 5px 0;background:rgba(255,255,255,.8);font:9px/13px "Liberation Sans",Arial,sans-serif;color:#333;white-space:nowrap}
      .credit a{font-size:10px;color:#0078a8;text-decoration:none}
      .flag{display:inline-block;width:10px;height:7px;margin-right:4px;background:linear-gradient(#4c7be1 50%,#ffd500 50%)}
    </style>
    <header><h2><app-icon name="place"></app-icon><slot></slot></h2><div class="actions">${action('file', 'Exportera')}${action('full', 'Helskärm')}</div></header>
    <div class="map"><city-map></city-map>
      <div class="tools"><div class="group zoom">${action('plus', 'Zooma in')}${action('minus', 'Zooma ut')}</div><div class="group off">${action('pin', 'Placera markör')}</div><div class="group">${action('move', 'Flytta')}${action('eraser', 'Radera')}</div></div>
      <div class="marker"><span>Enhet</span>
        <svg viewBox="0 0 22 40" aria-hidden="true"><path d="M11 2a4 4 0 0 0-4 4v14.500a9 9 0 1 0 8 0V6a4 4 0 0 0-4-4z" fill="#fff" stroke="#111" stroke-width="3"/><path d="M9 8v14a7 7 0 1 0 4 0V8a2 2 0 0 0-4 0z" fill="#2fae26" stroke="#111" stroke-width="1.500"/><path d="M7.500 29.500q3.500 4 7 0M8.500 26v1M13.500 26v1" fill="none" stroke="#0b5a12" stroke-width="1.300"/></svg></div>
      <div class="credit"><a href="#leaflet"><i class="flag"></i>Leaflet</a> | © <a href="#osm">OpenStreetMap</a> contributors, Tiles style by <a href="#hot">Humanitarian OpenStreetMap Team</a> hosted by <a href="#osmfr">OpenStreetMap France</a></div>
    </div>`;
  }
}
customElements.define('map-card', MapCard);

const OK = '#3fae2a', BAD = '#cf1d0e';
const STATS = [
  [['bubbles', 'PM 1.0 sensor B', '0 µg/m³', '#80c43c', 12], ['bubbles', 'PM 2.5 sensor B', '0 µg/m³', OK, 18], ['bubbles', 'PM 10 sensor B', '2 µg/m³', OK], ['air', 'bVOCeq sensor B', '0 ppm', OK], ['air', 'sIAQ sensor B', '26', OK], ['drop', 'Luftfukt. sensor B', '36 %', '#f68a1c'], ['home', 'Temp. sensor B', '18 °C', OK], ['clouds', 'Lufttryck sensor B', '1022 mbar', BAD]],
  [['home', 'Temp. Gateway', '20 °C', OK], ['drop', 'Luftfukt. Gateway', '41 %', OK], ['co2', 'CO2 sensor A', '693 ppm', OK], ['air', 'bVOCeq sensor A', '1 ppm', OK], ['air', 'sIAQ sensor A', '27', OK], ['drop', 'Luftfukt. sensor A', '40 %', OK], ['home', 'Temp. sensor A', '18 °C', OK], ['clouds', 'Lufttryck sensor A', '1022 mbar', BAD]]
];
class SensorDashboard extends HTMLElement {
  connectedCallback() {
    const row = list => list.map(([i, t, v, c, s]) => `<stat-card icon="${i}" value="${v}" tone="${c}" size="${s || 24}">${t}</stat-card>`).join('');
    this.attachShadow({ mode: 'open' }).innerHTML = `<style>
      :host{display:block;padding:10px 9px 53px 16px}
      section{display:flex;gap:8px}
      .first{margin:0 -1px 13px -2px}
      .trends{display:grid;grid-template-columns:repeat(3,minmax(0,1fr));gap:8px 9px;margin:8px 0 0 1px}
      .trends+.trends{margin-top:7px}
      .wide{display:grid;grid-template-columns:repeat(2,minmax(0,1fr));gap:8px;grid-auto-rows:minmax(385px,auto);margin:14px 2px 37px 3px}
      .settings{display:flex;align-items:center;justify-content:center;gap:3px;width:190px;height:42px;margin-left:9px;padding:0;border:0;border-radius:4px;background:#487299;color:#fff;font:500 12px/16px Roboto,sans-serif;box-shadow:0 2px 4px rgba(0,0,0,.18)}
    </style>
    <section class="first">${row(STATS[0])}</section>
    <section>${row(STATS[1])}</section>
    <div class="trends">
      <trend-card icon="bubbles" data="pm">Partikelmängd</trend-card>
      <trend-card icon="air" data="voc">Luftkvalitet bVOCeq</trend-card>
      <trend-card icon="air" data="iaq">Luftkvalitet sIAQ</trend-card>
      <trend-card icon="co2" data="co2">CO2 trend</trend-card>
      <trend-card icon="clouds" data="pressure">Lufttryck</trend-card>
      <trend-card icon="home" data="temp">Temperaturtrend</trend-card>
    </div>
    <div class="trends">
      <trend-card icon="bulb" data="light">Ljusstyrka</trend-card>
      <trend-card icon="humidity" data="humid">Luftfuktighet</trend-card>
      <device-card>Enhetsöversikt</device-card>
    </div>
    <div class="wide"><alarm-card>Larm</alarm-card><map-card>Enhetens plats</map-card></div>
    <button class="settings" type="button"><app-icon name="gear"></app-icon>Inställningar</button>`;
  }
}
customElements.define('sensor-dashboard', SensorDashboard);
</script>
</body>
</html>
